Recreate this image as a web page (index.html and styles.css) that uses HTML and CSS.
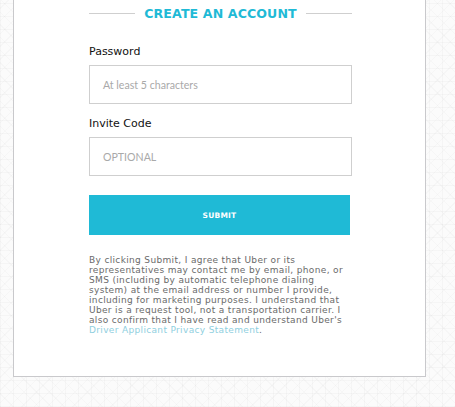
FILE: index.html
```html
<!DOCTYPE html>
<html>
<head>
<meta charset="utf-8">
<link rel="stylesheet" href="styles.css">
</head>
<body>
<div class="card">
  <div class="form">
    <div class="title-row">
      <span class="rule"></span>
      <h1 class="title">CREATE AN ACCOUNT</h1>
      <span class="rule"></span>
    </div>
    <label class="label">Password</label>
    <div class="input"><span class="placeholder">At least 5 characters</span></div>
    <label class="label label-second">Invite Code</label>
    <div class="input"><span class="placeholder">OPTIONAL</span></div>
    <button class="submit">SUBMIT</button>
    <p class="legal">By clicking Submit, I agree that Uber or its representatives may contact me by email, phone, or SMS (including by automatic telephone dialing system) at the email address or number I provide, including for marketing purposes. I understand that Uber is a request tool, not a transportation carrier. I also confirm that I have read and understand Uber's <a class="link">Driver Applicant Privacy Statement</a>.</p>
  </div>
</div>
</body>
</html>
```
FILE: styles.css
```css
html, body {
  margin: 0;
  padding: 0;
}
body {
  width: 455px;
  height: 407px;
  overflow: hidden;
  background-color: #fbfbfb;
  background-image:
    repeating-linear-gradient(45deg, rgba(0,0,0,0.018) 0 1px, transparent 1px 9px),
    repeating-linear-gradient(-45deg, rgba(0,0,0,0.018) 0 1px, transparent 1px 9px),
    repeating-linear-gradient(0deg, rgba(0,0,0,0.025) 0 1px, transparent 1px 13px),
    repeating-linear-gradient(90deg, rgba(0,0,0,0.025) 0 1px, transparent 1px 13px);
  font-family: "DejaVu Sans", sans-serif;
}
.card {
  margin-left: 13px;
  width: 411px;
  height: 376px;
  background: #fff;
  border: 1px solid #c9c9cc;
  border-top: none;
}
.form {
  margin-left: 75px;
  width: 263px;
  display: flex;
  flex-direction: column;
}
.title-row {
  display: flex;
  align-items: center;
  gap: 9px;
  height: 26px;
}
.rule {
  flex: 1;
  height: 1px;
  background: #cfcfcf;
}
.title {
  margin: 0;
  font-size: 12.6px;
  font-weight: bold;
  color: #1fbad6;
  letter-spacing: 0.1px;
}
.label {
  margin-top: 19px;
  font-size: 11px;
  color: #111;
  line-height: 14px;
}
.label-second {
  margin-top: 13px;
}
.input {
  margin-top: 6px;
  height: 37px;
  border: 1px solid #cfcfcf;
  display: flex;
  align-items: center;
  padding-left: 13px;
}
.placeholder {
  font-family: "Lato", sans-serif;
  font-size: 10.6px;
  color: #a9a9a9;
}
.submit {
  margin-top: 19px;
  width: 261px;
  height: 40px;
  border: none;
  background: #1fbad6;
  color: #fff;
  font-family: "DejaVu Sans", sans-serif;
  font-weight: bold;
  font-size: 7.5px;
  letter-spacing: 0.2px;
  padding: 0;
}
.legal {
  margin: 20px 0 0 0;
  width: 258px;
  font-size: 9px;
  line-height: 10px;
  color: #6a6a6a;
  letter-spacing: 0.34px;
}
.link {
  color: #8fcfe0;
}
```
